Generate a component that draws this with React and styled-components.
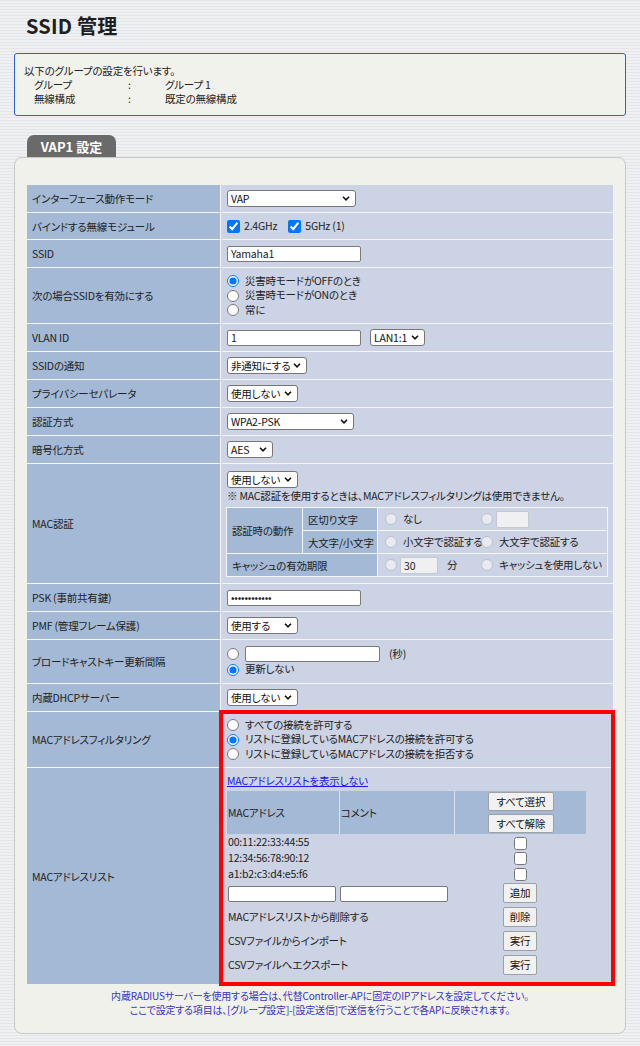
import React from "react"
import styled, { createGlobalStyle } from "styled-components"

const GlobalStyle = createGlobalStyle`
  html, body {
    margin: 0;
    padding: 0;
  }
  body {
    min-height: 1046px;
    background-color: #e9eaee;
    background-image: repeating-linear-gradient(
      180deg,
      #e3e5e9 0px,
      #e3e5e9 1px,
      #eef0f2 1px,
      #eef0f2 3px
    );
    font-family: "Noto Sans CJK JP", "Noto Sans", sans-serif;
    font-size: 10.5px;
    letter-spacing: -0.2px;
    color: #222;
    font-feature-settings: "palt";
  }
  input, select, button {
    font-family: inherit;
    letter-spacing: inherit;
    font-feature-settings: "palt";
  }
`

const Page = styled.div`
  padding: 0 14px 13px;
`

const Title = styled.h1`
  margin: 0;
  padding: 14px 0 0 12px;
  font-size: 20px;
  line-height: 24px;
  font-weight: 700;
  letter-spacing: 0.2px;
  color: #1e1e1e;
`

const InfoBox = styled.div`
  margin-top: 15px;
  border: 1px solid #2e5fd9;
  border-radius: 3px;
  background: #f2f2ec;
  padding: 10px 9px 9px;
  line-height: 14px;
`

const InfoGrid = styled.div`
  display: grid;
  grid-template-columns: 94px 37px auto;
  padding-left: 10px;
`

const Tab = styled.div`
  margin: 19px 0 0 13px;
  width: 89px;
  height: 22px;
  background: #6a6a6a;
  color: #fff;
  font-weight: 700;
  font-size: 13px;
  letter-spacing: 0;
  border-radius: 7px 7px 0 0;
  display: flex;
  align-items: center;
  justify-content: center;
`

const Panel = styled.div`
  background: #f1f1ec;
  border: 1px solid #c8c8c8;
  border-radius: 8px;
  padding: 27px 12px 16px;
`

const Form = styled.div`
  display: grid;
  grid-template-columns: 193px 392px;
  gap: 1px;
  background: #f4f6fa;
`

const Label = styled.div`
  background: #a4b9d5;
  display: flex;
  align-items: center;
  padding: 0 5px;
  min-height: ${(p) => p.$h || 27}px;
`

const Value = styled.div`
  background: #cbd3e5;
  display: flex;
  flex-direction: column;
  justify-content: ${(p) => (p.$top ? "flex-start" : "center")};
  align-items: flex-start;
  padding: ${(p) => p.$pad || "0 6px"};
  min-width: 0;
`

const Highlight = styled.div`
  grid-row: span 2;
  display: grid;
  grid-template-rows: subgrid;
  row-gap: 1px;
  background: #f4f6fa;
  outline: 4px solid #ff0000;
  outline-offset: -2px;
  position: relative;
  z-index: 1;
`

const Inline = styled.div`
  display: flex;
  align-items: center;
  gap: ${(p) => p.$gap ?? 9}px;
`

const Stack = styled.div`
  display: flex;
  flex-direction: column;
`

const Opt = styled.label`
  display: inline-flex;
  align-items: center;
  gap: ${(p) => p.$gap ?? 6}px;
  line-height: 14.5px;
  white-space: nowrap;
`

const Radio = styled.input.attrs({ type: "radio" })`
  margin: 0;
  width: 12px;
  height: 12px;
`

const Check = styled.input.attrs({ type: "checkbox" })`
  margin: 0;
  width: 13px;
  height: 13px;
`

const TextInput = styled.input`
  width: ${(p) => p.$w}px;
  height: ${(p) => p.$h || 16}px;
  box-sizing: border-box;
  border: 1px solid ${(p) => (p.disabled ? "#c4c8d0" : "#7a7a7a")};
  border-radius: 2px;
  padding: 0 3px;
  font-size: 10.5px;
  color: #222;
  background: ${(p) => (p.disabled ? "#f0f0f0" : "#fff")};
  margin: 0;
`

const SelectWrap = styled.span`
  position: relative;
  display: inline-flex;
  width: ${(p) => p.$w}px;
  height: 17px;
`

const SelectField = styled.select`
  appearance: none;
  width: 100%;
  height: 100%;
  box-sizing: border-box;
  border: 1px solid #767676;
  border-radius: 3px;
  background: #fff;
  padding: 0 14px 0 3px;
  font-size: 10.5px;
  color: #111;
  margin: 0;
`

const Chevron = styled.svg`
  position: absolute;
  right: 6px;
  top: 6px;
  width: 8px;
  height: 5px;
  pointer-events: none;
`

const Button = styled.button`
  height: ${(p) => p.$h || 20}px;
  width: ${(p) => p.$w || 34}px;
  padding: 0;
  font-size: 10.5px;
  border: 1px solid #a0a0a0;
  border-radius: 2px;
  background: #f1f1f1;
  color: #111;
  margin: 0;
`

const Note = styled.div`
  line-height: 14px;
  margin-top: 1px;
  white-space: nowrap;
`

const AuthTable = styled.table`
  border-collapse: collapse;
  table-layout: fixed;
  width: 382px;
  margin-top: 4px;
  margin-left: -1px;
`

const AuthHead = styled.td`
  background: #a4b9d5;
  border: 1px solid #f4f6fa;
  padding: 0 5px;
  height: 22px;
  white-space: nowrap;
`

const AuthCell = styled.td`
  border: 1px solid #f4f6fa;
  padding: 0 2px 0 7px;
  height: 22px;
`

const AuthLine = styled.div`
  display: grid;
  grid-template-columns: 96px auto;
  align-items: center;
`

const LinkText = styled.a`
  color: #1a1ae6;
  text-decoration: underline;
  line-height: 14px;
  cursor: pointer;
`

const ListTable = styled.table`
  border-collapse: collapse;
  width: 359px;
  margin-top: 3px;
`

const ListHead = styled.th`
  background: #a4b9d5;
  font-weight: 400;
  text-align: left;
  padding: 1px 0 1px 1px;
  width: ${(p) => p.$w}px;
  border-left: 1px solid #dbe2ee;
  &:first-child {
    border-left: 0;
  }
`

const HeadButtons = styled.div`
  display: flex;
  flex-direction: column;
  align-items: center;
  gap: 3px;
`

const ListCell = styled.td`
  padding: 0 1px;
  height: ${(p) => p.$h || 24}px;
  text-align: ${(p) => (p.$center ? "center" : "left")};
  vertical-align: middle;
  white-space: nowrap;
  & > * {
    vertical-align: middle;
  }
`

const Footer = styled.div`
  text-align: center;
  color: #3434c4;
  font-size: 10px;
  line-height: 14px;
  padding-top: 5px;
`

const Select = ({ w, value }) => (
  <SelectWrap $w={w}>
    <SelectField defaultValue={value}>
      <option>{value}</option>
    </SelectField>
    <Chevron viewBox="0 0 8 5">
      <path d="M1 0.8 L4 3.8 L7 0.8" fill="none" stroke="#111" strokeWidth="1.6" />
    </Chevron>
  </SelectWrap>
)

const macs = ["00:11:22:33:44:55", "12:34:56:78:90:12", "a1:b2:c3:d4:e5:f6"]

const actions = [
  { label: "MACアドレスリストから削除する", button: "削除" },
  { label: "CSVファイルからインポート", button: "実行" },
  { label: "CSVファイルへエクスポート", button: "実行" },
]

export default function App() {
  return (
    <>
      <GlobalStyle />
      <Page>
        <Title>SSID 管理</Title>
        <InfoBox>
          <div>以下のグループの設定を行います。</div>
          <InfoGrid>
            <span>グループ</span>
            <span>:</span>
            <span>グループ 1</span>
            <span>無線構成</span>
            <span>:</span>
            <span>既定の無線構成</span>
          </InfoGrid>
        </InfoBox>

        <Tab>VAP1 設定</Tab>
        <Panel>
          <Form>
            <Label>インターフェース動作モード</Label>
            <Value>
              <Select w={129} value="VAP" />
            </Value>

            <Label $h={26}>バインドする無線モジュール</Label>
            <Value>
              <Inline $gap={11}>
                <Opt $gap={4}>
                  <Check defaultChecked />
                  2.4GHz
                </Opt>
                <Opt $gap={4}>
                  <Check defaultChecked />
                  5GHz (1)
                </Opt>
              </Inline>
            </Value>

            <Label>SSID</Label>
            <Value>
              <TextInput $w={134} defaultValue="Yamaha1" />
            </Value>

            <Label $h={55}>次の場合SSIDを有効にする</Label>
            <Value>
              <Stack>
                <Opt>
                  <Radio name="ssid" defaultChecked />
                  災害時モードがOFFのとき
                </Opt>
                <Opt>
                  <Radio name="ssid" />
                  災害時モードがONのとき
                </Opt>
                <Opt>
                  <Radio name="ssid" />
                  常に
                </Opt>
              </Stack>
            </Value>

            <Label>VLAN ID</Label>
            <Value>
              <Inline>
                <TextInput $w={134} defaultValue="1" />
                <Select w={55} value="LAN1:1" />
              </Inline>
            </Value>

            <Label>SSIDの通知</Label>
            <Value>
              <Select w={80} value="非通知にする" />
            </Value>

            <Label>プライバシーセパレータ</Label>
            <Value>
              <Select w={71} value="使用しない" />
            </Value>

            <Label>認証方式</Label>
            <Value>
              <Select w={127} value="WPA2-PSK" />
            </Value>

            <Label>暗号化方式</Label>
            <Value>
              <Select w={46} value="AES" />
            </Value>

            <Label $h={119}>MAC認証</Label>
            <Value $pad="7px 6px 6px">
              <Select w={71} value="使用しない" />
              <Note>※ MAC認証を使用するときは、MACアドレスフィルタリングは使用できません。</Note>
              <AuthTable>
                <colgroup>
                  <col style={{ width: 76 }} />
                  <col style={{ width: 75 }} />
                  <col />
                </colgroup>
                <tbody>
                  <tr>
                    <AuthHead rowSpan={2}>認証時の動作</AuthHead>
                    <AuthHead>区切り文字</AuthHead>
                    <AuthCell>
                      <AuthLine>
                        <Opt>
                          <Radio name="sep" disabled />
                          なし
                        </Opt>
                        <Opt $gap={3}>
                          <Radio name="sep" disabled />
                          <TextInput $w={33} $h={17} disabled />
                        </Opt>
                      </AuthLine>
                    </AuthCell>
                  </tr>
                  <tr>
                    <AuthHead>大文字/小文字</AuthHead>
                    <AuthCell>
                      <AuthLine>
                        <Opt>
                          <Radio name="case" disabled />
                          小文字で認証する
                        </Opt>
                        <Opt>
                          <Radio name="case" disabled />
                          大文字で認証する
                        </Opt>
                      </AuthLine>
                    </AuthCell>
                  </tr>
                  <tr>
                    <AuthHead colSpan={2}>キャッシュの有効期限</AuthHead>
                    <AuthCell>
                      <AuthLine>
                        <Opt $gap={3}>
                          <Radio name="cache" disabled />
                          <TextInput $w={38} $h={17} disabled defaultValue="30" />
                          <span style={{ marginLeft: 6 }}>分</span>
                        </Opt>
                        <Opt>
                          <Radio name="cache" disabled />
                          キャッシュを使用しない
                        </Opt>
                      </AuthLine>
                    </AuthCell>
                  </tr>
                </tbody>
              </AuthTable>
            </Value>

            <Label>PSK (事前共有鍵)</Label>
            <Value>
              <TextInput $w={134} type="password" defaultValue="yamahapass12" />
            </Value>

            <Label>PMF (管理フレーム保護)</Label>
            <Value>
              <Select w={71} value="使用する" />
            </Value>

            <Label $h={43}>ブロードキャストキー更新間隔</Label>
            <Value>
              <Stack>
                <Opt>
                  <Radio name="bc" />
                  <Inline>
                    <TextInput $w={135} />
                    (秒)
                  </Inline>
                </Opt>
                <Opt>
                  <Radio name="bc" defaultChecked />
                  更新しない
                </Opt>
              </Stack>
            </Value>

            <Label>内蔵DHCPサーバー</Label>
            <Value>
              <Select w={71} value="使用しない" />
            </Value>

            <Label $h={55}>MACアドレスフィルタリング</Label>
            <Highlight>
              <Value>
                <Stack>
                  <Opt>
                    <Radio name="filter" />
                    すべての接続を許可する
                  </Opt>
                  <Opt>
                    <Radio name="filter" defaultChecked />
                    リストに登録しているMACアドレスの接続を許可する
                  </Opt>
                  <Opt>
                    <Radio name="filter" />
                    リストに登録しているMACアドレスの接続を拒否する
                  </Opt>
                </Stack>
              </Value>
              <Value $top $pad="6px 6px 5px">
                <LinkText>MACアドレスリストを表示しない</LinkText>
                <ListTable>
                  <thead>
                    <tr>
                      <ListHead $w={111}>MACアドレス</ListHead>
                      <ListHead $w={113}>コメント</ListHead>
                      <ListHead $w={133}>
                        <HeadButtons>
                          <Button $w={66} $h={19}>
                            すべて選択
                          </Button>
                          <Button $w={66} $h={19}>
                            すべて解除
                          </Button>
                        </HeadButtons>
                      </ListHead>
                    </tr>
                  </thead>
                  <tbody>
                    {macs.map((mac) => (
                      <tr key={mac}>
                        <ListCell $h={15.5}>{mac}</ListCell>
                        <ListCell $h={15.5} />
                        <ListCell $h={15.5} $center>
                          <Check />
                        </ListCell>
                      </tr>
                    ))}
                    <tr>
                      <ListCell>
                        <TextInput $w={108} />
                      </ListCell>
                      <ListCell>
                        <TextInput $w={108} />
                      </ListCell>
                      <ListCell $center>
                        <Button>追加</Button>
                      </ListCell>
                    </tr>
                    {actions.map((a) => (
                      <tr key={a.label}>
                        <ListCell colSpan={2}>{a.label}</ListCell>
                        <ListCell $center>
                          <Button>{a.button}</Button>
                        </ListCell>
                      </tr>
                    ))}
                  </tbody>
                </ListTable>
              </Value>
            </Highlight>
            <Label $h={216}>MACアドレスリスト</Label>
          </Form>
          <Footer>
            <div>内蔵RADIUSサーバーを使用する場合は、代替Controller-APに固定のIPアドレスを設定してください。</div>
            <div>ここで設定する項目は、[グループ設定]-[設定送信]で送信を行うことで各APに反映されます。</div>
          </Footer>
        </Panel>
      </Page>
    </>
  )
}
